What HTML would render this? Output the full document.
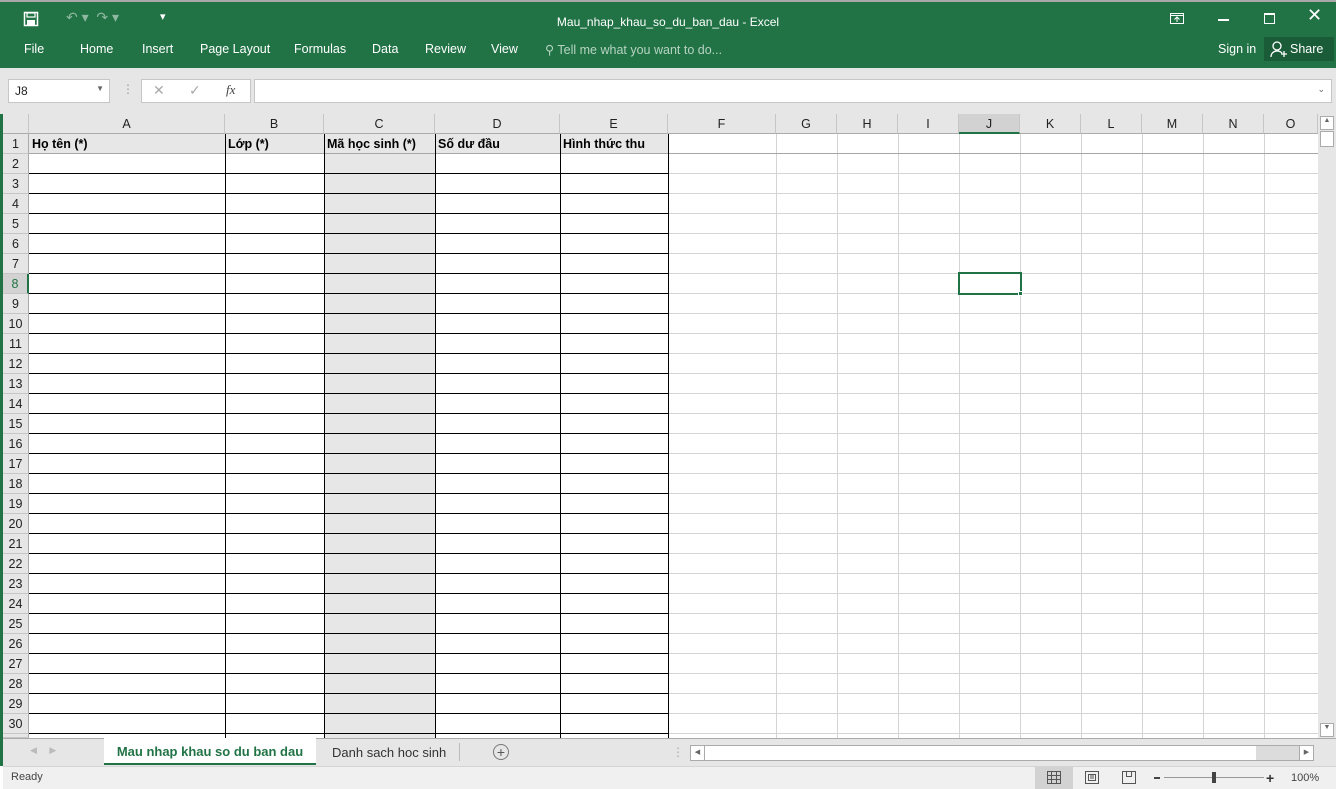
<!DOCTYPE html>
<html><head><meta charset="utf-8"><style>
*{margin:0;padding:0;box-sizing:border-box}
body{width:1336px;height:789px;overflow:hidden;position:relative;background:#fff;font-family:"Liberation Sans",sans-serif;font-size:12px;color:#222}
.a{position:absolute}
.top{left:0;top:0;width:1336px;height:68px;background:#217346;color:#fff}
.menu span{position:absolute;top:42px;font-size:12.5px}
.fb{left:0;top:68px;width:1336px;height:46px;background:#e6e6e6}
.hdr{top:114px;height:20px;background:#e6e6e6;border-right:1px solid #c6c6c6;border-bottom:1px solid #ababab;text-align:center;line-height:20px;font-size:12.5px;color:#222}
.rn{left:3px;width:26px;height:20px;background:#e6e6e6;border-bottom:1px solid #c6c6c6;border-right:1px solid #ababab;text-align:center;line-height:20px;font-size:12.5px}
.vl{top:134px;width:1px;height:604px;background:#d4d4d4}
.bl{top:134px;width:1px;height:604px;background:#000}
.h1{top:137px;font-weight:bold;font-size:12.5px;color:#000}
</style></head><body>
<div class="a top">
 <div class="a" style="left:0;top:0;width:1336px;height:2px;background:#a8a8a8"></div>
 <svg class="a" style="left:23px;top:11px" width="16" height="16" viewBox="0 0 16 16"><rect x="1.5" y="1.5" width="13" height="13" fill="none" stroke="#fff" stroke-width="1.5"/><rect x="4" y="2" width="8" height="4" fill="none" stroke="#fff" stroke-width="1.2"/><rect x="4" y="9" width="8" height="5" fill="#fff"/></svg>
 <div class="a" style="left:66px;top:9px;color:#8fb8a0;font-size:14px">↶ ▾ &nbsp;↷ ▾</div>
 <div class="a" style="left:160px;top:10px;font-size:11px">▾</div>
 <div class="a" style="left:0;width:1336px;top:15px;text-align:center;font-size:12px">Mau_nhap_khau_so_du_ban_dau - Excel</div>
 <svg class="a" style="left:1170px;top:13px" width="14" height="11"><rect x="0.5" y="0.5" width="13" height="10" fill="none" stroke="#fff"/><line x1="0" y1="2.5" x2="14" y2="2.5" stroke="#fff"/><path d="M7 9V4M4.5 6.5L7 4l2.5 2.5" stroke="#fff" fill="none"/></svg>
 <div class="a" style="left:1218px;top:19px;width:11px;height:2px;background:#fff"></div>
 <div class="a" style="left:1264px;top:13px;width:11px;height:11px;border:1px solid #fff;border-top-width:2px"></div>
 <div class="a" style="left:1307px;top:5px;font-size:18px">✕</div>
 <div class="menu">
  <span style="left:24px">File</span><span style="left:80px">Home</span><span style="left:142px">Insert</span><span style="left:200px">Page Layout</span><span style="left:294px">Formulas</span><span style="left:372px">Data</span><span style="left:425px">Review</span><span style="left:491px">View</span>
  <span style="left:545px;color:#b6d3c1">⚲ Tell me what you want to do...</span>
  <span style="left:1218px">Sign in</span>
 </div>
 <div class="a" style="left:1264px;top:37px;width:70px;height:24px;background:#1a5c38"></div>
 <svg class="a" style="left:1270px;top:40px" width="18" height="18"><circle cx="7" cy="6" r="4" fill="none" stroke="#fff" stroke-width="1.3"/><path d="M1 17c0-4 3-6 6-6s4 1 5 2" fill="none" stroke="#fff" stroke-width="1.3"/><path d="M14 11v6M11 14h6" stroke="#fff" stroke-width="1.3"/></svg>
 <span class="a" style="left:1290px;top:42px;font-size:12.5px">Share</span>
</div>
<div class="a fb">
 <div class="a" style="left:8px;top:11px;width:102px;height:24px;background:#fff;border:1px solid #c6c6c6;padding:4px 6px;font-size:12px">J8<span style="position:absolute;right:5px;top:4px;font-size:8px;color:#666">▼</span></div>
 <div class="a" style="left:122px;top:14px;color:#999">⋮</div>
 <div class="a" style="left:141px;top:11px;width:110px;height:24px;background:#fff;border:1px solid #c6c6c6"></div>
 <div class="a" style="left:153px;top:14px;color:#aaa;font-size:14px">✕</div>
 <div class="a" style="left:189px;top:14px;color:#aaa;font-size:14px">✓</div>
 <div class="a" style="left:226px;top:14px;color:#444;font-style:italic;font-family:'Liberation Serif',serif;font-size:13px">fx</div>
 <div class="a" style="left:254px;top:11px;width:1078px;height:24px;background:#fff;border:1px solid #c6c6c6"><span style="position:absolute;right:6px;top:4px;font-size:9px;color:#666">⌄</span></div>
</div>
<div class="a" style="left:0;top:114px;width:3px;height:652px;background:#217346"></div>
<div class="a" style="left:1318px;top:114px;width:18px;height:624px;background:#e6e6e6"></div>
<div class="a" style="left:1320px;top:116px;width:14px;height:14px;background:#fff;border:1px solid #ababab;font-size:7px;text-align:center;color:#666">▲</div>
<div class="a" style="left:1320px;top:131px;width:14px;height:16px;background:#fff;border:1px solid #ababab"></div>
<div class="a" style="left:1320px;top:723px;width:14px;height:14px;background:#fff;border:1px solid #ababab;font-size:7px;text-align:center;color:#666">▼</div>
<div class="a hdr" style="left:3px;width:26px"></div>
<div class="a hdr" style="left:29px;width:196px">A</div>
<div class="a hdr" style="left:225px;width:99px">B</div>
<div class="a hdr" style="left:324px;width:111px">C</div>
<div class="a hdr" style="left:435px;width:125px">D</div>
<div class="a hdr" style="left:560px;width:108px">E</div>
<div class="a hdr" style="left:668px;width:108px">F</div>
<div class="a hdr" style="left:776px;width:61px">G</div>
<div class="a hdr" style="left:837px;width:61px">H</div>
<div class="a hdr" style="left:898px;width:61px">I</div>
<div class="a hdr" style="left:959px;width:61px;background:#d2d2d2;border-bottom:2px solid #217346">J</div>
<div class="a hdr" style="left:1020px;width:61px">K</div>
<div class="a hdr" style="left:1081px;width:61px">L</div>
<div class="a hdr" style="left:1142px;width:61px">M</div>
<div class="a hdr" style="left:1203px;width:61px">N</div>
<div class="a hdr" style="left:1264px;width:54px">O</div>
<div class="a" style="left:29px;top:134px;width:1289px;height:604px;background:repeating-linear-gradient(to bottom,transparent 0 19px,#d4d4d4 19px 20px)"></div>
<div class="a vl" style="left:776px"></div><div class="a vl" style="left:837px"></div><div class="a vl" style="left:898px"></div><div class="a vl" style="left:959px"></div><div class="a vl" style="left:1020px"></div><div class="a vl" style="left:1081px"></div><div class="a vl" style="left:1142px"></div><div class="a vl" style="left:1203px"></div><div class="a vl" style="left:1264px"></div>
<div class="a" style="left:29px;top:134px;width:639px;height:19px;background:#e7e7e7"></div>
<div class="a" style="left:29px;top:153px;width:1289px;height:1px;background:#a6a6a6"></div>
<div class="a" style="left:325px;top:154px;width:110px;height:584px;background:#e7e7e7"></div>
<div class="a" style="left:29px;top:154px;width:639px;height:584px;background:repeating-linear-gradient(to bottom,transparent 0 19px,#000 19px 20px)"></div>
<div class="a bl" style="left:225px"></div><div class="a bl" style="left:324px"></div><div class="a bl" style="left:435px"></div><div class="a bl" style="left:560px"></div><div class="a bl" style="left:668px"></div>
<div class="a h1" style="left:32px">Họ tên (*)</div>
<div class="a h1" style="left:228px">Lớp (*)</div>
<div class="a h1" style="left:327px">Mã học sinh (*)</div>
<div class="a h1" style="left:438px">Số dư đầu</div>
<div class="a h1" style="left:563px">Hình thức thu</div>
<div class="a" style="left:958px;top:272px;width:64px;height:23px;border:2px solid #217346"></div>
<div class="a" style="left:1018px;top:291px;width:5px;height:5px;background:#217346;border:1px solid #fff"></div>
<div class="a rn" style="top:134px">1</div><div class="a rn" style="top:154px">2</div><div class="a rn" style="top:174px">3</div><div class="a rn" style="top:194px">4</div><div class="a rn" style="top:214px">5</div><div class="a rn" style="top:234px">6</div><div class="a rn" style="top:254px">7</div><div class="a rn" style="top:274px;background:#d2d2d2;color:#217346;border-right:2px solid #217346">8</div><div class="a rn" style="top:294px">9</div><div class="a rn" style="top:314px">10</div><div class="a rn" style="top:334px">11</div><div class="a rn" style="top:354px">12</div><div class="a rn" style="top:374px">13</div><div class="a rn" style="top:394px">14</div><div class="a rn" style="top:414px">15</div><div class="a rn" style="top:434px">16</div><div class="a rn" style="top:454px">17</div><div class="a rn" style="top:474px">18</div><div class="a rn" style="top:494px">19</div><div class="a rn" style="top:514px">20</div><div class="a rn" style="top:534px">21</div><div class="a rn" style="top:554px">22</div><div class="a rn" style="top:574px">23</div><div class="a rn" style="top:594px">24</div><div class="a rn" style="top:614px">25</div><div class="a rn" style="top:634px">26</div><div class="a rn" style="top:654px">27</div><div class="a rn" style="top:674px">28</div><div class="a rn" style="top:694px">29</div><div class="a rn" style="top:714px">30</div>
<div class="a rn" style="top:734px;height:4px"></div>
<div class="a" style="left:3px;top:738px;width:1333px;height:28px;background:#e6e6e6;border-top:1px solid #ababab"></div>
<div class="a" style="left:30px;top:745px;color:#bbb;font-size:9px">◀ &nbsp;&nbsp;&nbsp; ▶</div>
<div class="a" style="left:104px;top:738px;width:212px;height:27px;background:#fff;border-bottom:2px solid #217346;color:#217346;font-weight:bold;font-size:13px;text-align:center;line-height:27px">Mau nhap khau so du ban dau</div>
<div class="a" style="left:332px;top:745px;font-size:13px;color:#333">Danh sach hoc sinh</div>
<div class="a" style="left:459px;top:743px;width:1px;height:18px;background:#bbb"></div>
<div class="a" style="left:493px;top:744px;width:16px;height:16px;border:1px solid #777;border-radius:50%;text-align:center;line-height:14px;font-size:14px;color:#555">+</div>
<div class="a" style="left:672px;top:745px;color:#aaa">⋮</div>
<div class="a" style="left:690px;top:745px;width:624px;height:16px;background:#fff;border:1px solid #ababab"></div>
<div class="a" style="left:1256px;top:746px;width:43px;height:14px;background:#dcdcdc"></div>
<div class="a" style="left:691px;top:746px;width:14px;height:14px;border-right:1px solid #ababab;font-size:7px;text-align:center;line-height:14px;color:#666">◀</div>
<div class="a" style="left:1299px;top:746px;width:14px;height:14px;border-left:1px solid #ababab;font-size:7px;text-align:center;line-height:14px;color:#666">▶</div>
<div class="a" style="left:3px;top:766px;width:1333px;height:23px;background:#f0f0f0;border-top:1px solid #d4d4d4"></div>
<div class="a" style="left:11px;top:771px;font-size:11px;color:#444">Ready</div>
<div class="a" style="left:1035px;top:767px;width:38px;height:22px;background:#d2d2d2"></div>
<svg class="a" style="left:1047px;top:771px" width="14" height="13"><path d="M.5.5h13v12H.5zM.5 4.5h13M.5 8.5h13M4.5.5v12M9.5.5v12" fill="none" stroke="#555"/></svg>
<svg class="a" style="left:1085px;top:771px" width="14" height="13"><path d="M.5.5h13v12H.5zM3.5 3.5h7v6h-7zM5 5h4M5 7h4" fill="none" stroke="#555"/></svg>
<svg class="a" style="left:1122px;top:771px" width="14" height="13"><path d="M.5.5h13v12H.5zM4.5.5v5h5v-5" fill="none" stroke="#555"/></svg>
<div class="a" style="left:1154px;top:777px;width:6px;height:2px;background:#444"></div>
<div class="a" style="left:1164px;top:777px;width:100px;height:1px;background:#999"></div>
<div class="a" style="left:1212px;top:772px;width:4px;height:11px;background:#444"></div>
<div class="a" style="left:1266px;top:770px;font-size:14px;color:#333;font-weight:bold">+</div>
<div class="a" style="left:1291px;top:772px;font-size:11px;color:#444">100%</div>
</body></html>
